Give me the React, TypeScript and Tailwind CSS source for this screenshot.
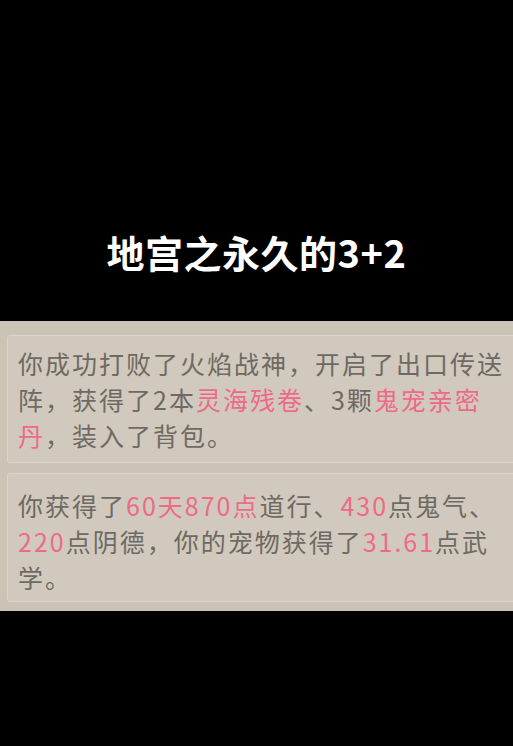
import React from "react";

const R = ({ children }: { children: React.ReactNode }) => (
  <span className="text-[#ee6a86]">{children}</span>
);

export default function App() {
  return (
    <div
      className="w-[513px] h-[746px] bg-black overflow-hidden"
      style={{ fontFamily: '"Noto Sans CJK SC", "Noto Sans", sans-serif' }}
    >
      <div className="h-[321px] pt-[228px] flex justify-center">
        <div className="text-white font-bold text-[38px] leading-[48px] tracking-[0.5px]">地宫之永久的3+2</div>
      </div>
      <div className="w-[513px] h-[290px] bg-[#cbc3b6] pt-[14px] pl-[7px] flex flex-col gap-[10px]">
        <div className="w-[530px] h-[128px] bg-[#d1c9bd] border border-[#dcd5ca] rounded-[3px] pl-[10px] pt-[9px]">
          <p className="w-[494px] text-[25px] leading-[36px] tracking-[2px] text-[#6e6a63]">
            你成功打败了火焰战神，开启了出口传送阵，获得了2本<R>灵海残卷</R>、3颗<R>鬼宠亲密丹</R>，装入了背包。
          </p>
        </div>
        <div className="w-[530px] h-[129px] bg-[#d1c9bd] border border-[#dcd5ca] rounded-[3px] pl-[10px] pt-[13px]">
          <p className="w-[494px] text-[25px] leading-[36px] tracking-[2px] text-[#6e6a63]">
            你获得了<R>60天870点</R>道行、<R>430</R>点鬼气、<R>220</R>点阴德，你的宠物获得了<R>31.61</R>点武学。
          </p>
        </div>
      </div>
    </div>
  );
}
